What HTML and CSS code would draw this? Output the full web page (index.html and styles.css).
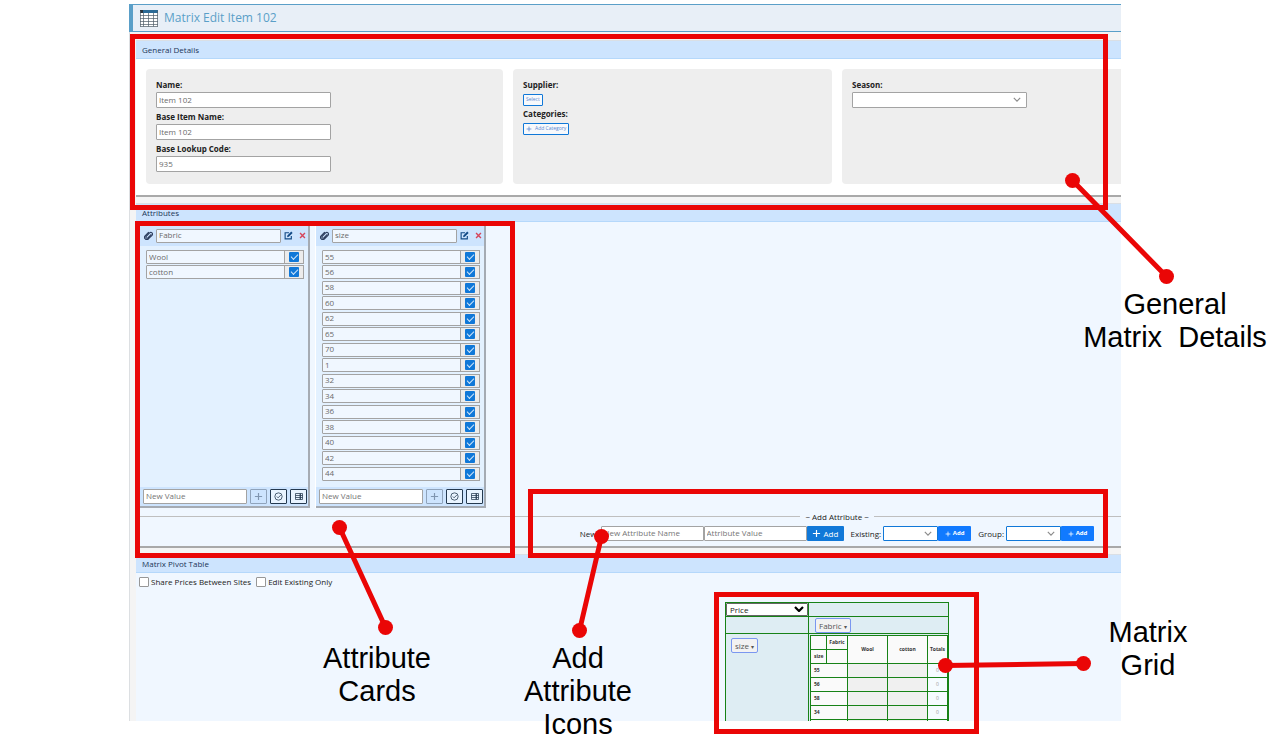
FILE: index.html
```html
<!DOCTYPE html>
<html lang="en">
<head>
<meta charset="utf-8">
<title>Matrix Edit Item 102</title>
<link rel="stylesheet" href="styles.css">
</head>
<body>
<svg class="sprite" aria-hidden="true">
  <symbol id="chevron" viewBox="0 0 10 6"><path d="M1 1l4 4 4-4" fill="none" stroke="currentColor" stroke-width="1.4"/></symbol>
  <symbol id="chevron-bold" viewBox="0 0 10 6"><path d="M1 1l4 4 4-4" fill="none" stroke="currentColor" stroke-width="2.2"/></symbol>
  <symbol id="plus" viewBox="0 0 10 10"><path d="M5 1v8M1 5h8" fill="none" stroke="currentColor" stroke-width="1.3"/></symbol>
  <symbol id="clip" viewBox="0 0 16 16"><path d="M12.5 6.5l-5.6 5.7a2 2 0 0 1-2.9-2.8l6-6a3 3 0 0 1 4.300 4.200l-6.600 6.600a4 4 0 0 1-5.700-5.600L8 2.500" fill="none" stroke="currentColor" stroke-width="2" stroke-linecap="round"/></symbol>
  <symbol id="edit" viewBox="0 0 16 16"><path d="M9 3H2v11h11V9" fill="none" stroke="currentColor" stroke-width="2"/><path d="M5.500 11l.6-3.200L12.800 1l2.500 2.500-6.700 6.800z" fill="currentColor"/></symbol>
  <symbol id="cross" viewBox="0 0 10 10"><path d="M1.500 1.500l7 7M8.500 1.500l-7 7" fill="none" stroke="currentColor" stroke-width="2"/></symbol>
  <symbol id="circle-check" viewBox="0 0 16 16"><circle cx="8" cy="8" r="6.500" fill="none" stroke="currentColor" stroke-width="1.400"/><path d="M5 8l2.300 2.300L12 5.500" fill="none" stroke="currentColor" stroke-width="1.400"/></symbol>
  <symbol id="list" viewBox="0 0 16 14"><path d="M1 1h14v12H1zM1 5h14M1 9h14" fill="none" stroke="currentColor" stroke-width="1.500"/><path d="M10.500 1v12" stroke="currentColor" stroke-width="2.500"/></symbol>
</svg>

<main class="app">
  <header class="title-bar">
    <svg class="title-icon" viewBox="0 0 18 17" aria-hidden="true">
      <path d="M0 .5h18V16.500H0z" fill="#fff"/><path d="M0 0h18v3H0z" fill="#2b6a96"/><path d="M0 0h3v3H0z" fill="#28333d"/>
      <path d="M.5 1v15.500M3.500 3v13.500M8.500 3v13.500M13.500 3v13.500M17.500 1v15.500M0 5.500h18M0 8.500h18M0 11.500h18M0 14.500h18M0 16.500h18" stroke="#4d5b67" fill="none" stroke-width=".7"/>
    </svg>
    <h1 class="title">Matrix Edit Item 102</h1>
  </header>

  <div class="panels">
    <section class="panel">
      <h2 class="panel-head">General Details</h2>
      <div class="details">
        <div class="box">
          <label class="label" for="name">Name:</label>
          <input class="text field" id="name" value="Item 102">
          <label class="label" for="base">Base Item Name:</label>
          <input class="text field" id="base" value="Item 102">
          <label class="label" for="code">Base Lookup Code:</label>
          <input class="text field" id="code" value="935">
        </div>
        <div class="box">
          <div class="label">Supplier:</div>
          <button class="mini">Select</button>
          <div class="label">Categories:</div>
          <button class="mini"><svg class="mini-plus"><use href="#plus"/></svg>Add Category</button>
        </div>
        <div class="box box-last">
          <label class="label" for="season">Season:</label>
          <div class="select field"><select id="season"><option></option></select><svg class="chevron"><use href="#chevron"/></svg></div>
        </div>
      </div>
    </section>

    <section class="panel tinted">
      <h2 class="panel-head">Attributes</h2>
      <div class="cards">
        <article class="card">
          <div class="card-head">
            <svg class="ico"><use href="#clip"/></svg>
            <input class="text grow" value="Fabric" aria-label="Attribute name">
            <button class="plain" aria-label="Edit"><svg class="ico"><use href="#edit"/></svg></button>
            <button class="plain danger" aria-label="Remove"><svg class="ico-x"><use href="#cross"/></svg></button>
          </div>
          <div class="values">
            <div class="value"><input class="text" value="Wool" aria-label="Value"><span class="tick"><input type="checkbox" checked aria-label="Wool"></span></div>
            <div class="value"><input class="text" value="cotton" aria-label="Value"><span class="tick"><input type="checkbox" checked aria-label="cotton"></span></div>
          </div>
          <div class="card-foot">
            <input class="text grow" placeholder="New Value" aria-label="New Value">
            <button class="tool off" aria-label="Add value"><svg class="ico"><use href="#plus"/></svg></button>
            <button class="tool" aria-label="Select all"><svg class="ico"><use href="#circle-check"/></svg></button>
            <button class="tool" aria-label="List"><svg class="ico-list"><use href="#list"/></svg></button>
          </div>
        </article>
        <article class="card">
          <div class="card-head">
            <svg class="ico"><use href="#clip"/></svg>
            <input class="text grow" value="size" aria-label="Attribute name">
            <button class="plain" aria-label="Edit"><svg class="ico"><use href="#edit"/></svg></button>
            <button class="plain danger" aria-label="Remove"><svg class="ico-x"><use href="#cross"/></svg></button>
          </div>
          <div class="values">
            <div class="value"><input class="text" value="55" aria-label="Value"><span class="tick"><input type="checkbox" checked aria-label="55"></span></div>
            <div class="value"><input class="text" value="56" aria-label="Value"><span class="tick"><input type="checkbox" checked aria-label="56"></span></div>
            <div class="value"><input class="text" value="58" aria-label="Value"><span class="tick"><input type="checkbox" checked aria-label="58"></span></div>
            <div class="value"><input class="text" value="60" aria-label="Value"><span class="tick"><input type="checkbox" checked aria-label="60"></span></div>
            <div class="value"><input class="text" value="62" aria-label="Value"><span class="tick"><input type="checkbox" checked aria-label="62"></span></div>
            <div class="value"><input class="text" value="65" aria-label="Value"><span class="tick"><input type="checkbox" checked aria-label="65"></span></div>
            <div class="value"><input class="text" value="70" aria-label="Value"><span class="tick"><input type="checkbox" checked aria-label="70"></span></div>
            <div class="value"><input class="text" value="1" aria-label="Value"><span class="tick"><input type="checkbox" checked aria-label="1"></span></div>
            <div class="value"><input class="text" value="32" aria-label="Value"><span class="tick"><input type="checkbox" checked aria-label="32"></span></div>
            <div class="value"><input class="text" value="34" aria-label="Value"><span class="tick"><input type="checkbox" checked aria-label="34"></span></div>
            <div class="value"><input class="text" value="36" aria-label="Value"><span class="tick"><input type="checkbox" checked aria-label="36"></span></div>
            <div class="value"><input class="text" value="38" aria-label="Value"><span class="tick"><input type="checkbox" checked aria-label="38"></span></div>
            <div class="value"><input class="text" value="40" aria-label="Value"><span class="tick"><input type="checkbox" checked aria-label="40"></span></div>
            <div class="value"><input class="text" value="42" aria-label="Value"><span class="tick"><input type="checkbox" checked aria-label="42"></span></div>
            <div class="value"><input class="text" value="44" aria-label="Value"><span class="tick"><input type="checkbox" checked aria-label="44"></span></div>
          </div>
          <div class="card-foot">
            <input class="text grow" placeholder="New Value" aria-label="New Value">
            <button class="tool off" aria-label="Add value"><svg class="ico"><use href="#plus"/></svg></button>
            <button class="tool" aria-label="Select all"><svg class="ico"><use href="#circle-check"/></svg></button>
            <button class="tool" aria-label="List"><svg class="ico-list"><use href="#list"/></svg></button>
          </div>
        </article>
      </div>
      <div class="divider">~ Add Attribute ~</div>
      <div class="add-row">
        <label class="add-label" for="new-name">New:</label>
        <input class="text add-text" id="new-name" placeholder="New Attribute Name">
        <input class="text add-text" placeholder="Attribute Value" aria-label="Attribute Value">
        <button class="add add-main"><svg class="ico"><use href="#plus"/></svg>Add</button>
        <label class="add-label" for="existing">Existing:</label>
        <div class="select blue"><select id="existing"><option></option></select><svg class="chevron"><use href="#chevron"/></svg></div>
        <button class="add add-small"><svg class="mini-plus"><use href="#plus"/></svg>Add</button>
        <label class="add-label" for="group">Group:</label>
        <div class="select blue"><select id="group"><option></option></select><svg class="chevron"><use href="#chevron"/></svg></div>
        <button class="add add-small"><svg class="mini-plus"><use href="#plus"/></svg>Add</button>
      </div>
    </section>

    <section class="panel tinted pivot-panel">
      <h2 class="panel-head">Matrix Pivot Table</h2>
      <div class="options">
        <label class="option"><input type="checkbox">Share Prices Between Sites</label>
        <label class="option"><input type="checkbox">Edit Existing Only</label>
      </div>
      <table class="pivot">
        <tr class="r-top">
          <td class="c-side"><div class="select price"><select aria-label="Measure"><option>Price</option></select><svg class="chevron"><use href="#chevron-bold"/></svg></div></td>
          <td></td>
        </tr>
        <tr class="r-cols"><td></td><td><button class="pill">Fabric <span class="arrow">▾</span></button></td></tr>
        <tr>
          <td class="c-rows"><button class="pill">size <span class="arrow">▾</span></button></td>
          <td class="c-grid">
            <table class="grid">
              <colgroup><col class="w-a"><col class="w-b"><col class="w-c"><col class="w-c"><col></colgroup>
              <tr><th></th><th>Fabric</th><th rowspan="2">Wool</th><th rowspan="2">cotton</th><th rowspan="2">Totals</th></tr>
              <tr><th class="left">size</th><th></th></tr>
              <tr><th class="left" colspan="2">55</th><td></td><td></td><td class="total">0</td></tr>
              <tr><th class="left" colspan="2">56</th><td></td><td></td><td class="total">0</td></tr>
              <tr><th class="left" colspan="2">58</th><td></td><td></td><td class="total">0</td></tr>
              <tr><th class="left" colspan="2">34</th><td></td><td></td><td class="total">0</td></tr>
              <tr><th class="left" colspan="2"></th><td></td><td></td><td class="total"></td></tr>
            </table>
          </td>
        </tr>
      </table>
    </section>
  </div>
</main>

<svg class="callouts" width="1272" height="749" aria-hidden="true">
  <g fill="none" stroke="#ea0606" stroke-width="5">
    <rect x="132.500" y="36.500" width="973" height="171"/>
    <rect x="137.500" y="223.500" width="375" height="332"/>
    <rect x="530.500" y="491.500" width="575" height="64"/>
    <rect x="716.500" y="594.500" width="260" height="137"/>
    <path d="M1072.500 180.500L1166.500 276.500M339.500 527.500L385.500 627.500M601.500 536.500L579.500 630.500M945.500 665.500L1083.500 663.500"/>
  </g>
  <g fill="#ea0606">
    <circle cx="1072.500" cy="180.500" r="7.500"/><circle cx="1166.500" cy="276.500" r="7.500"/>
    <circle cx="339.500" cy="527.500" r="7.500"/><circle cx="385.500" cy="627.500" r="7.500"/>
    <circle cx="601.500" cy="536.500" r="7.500"/><circle cx="579.500" cy="630.500" r="7.500"/>
    <circle cx="945.500" cy="665.500" r="7.500"/><circle cx="1083.500" cy="663.500" r="7.500"/>
  </g>
</svg>
<p class="note note-general">General
Matrix  Details</p>
<p class="note note-cards">Attribute
Cards</p>
<p class="note note-add">Add
Attribute
Icons</p>
<p class="note note-grid">Matrix
Grid</p>
</body>
</html>
```
FILE: styles.css
```css
* { box-sizing: border-box; }
body {
  margin: 0;
  position: relative;
  height: 100vh;
  overflow: hidden;
  background: #fff;
  color: #222;
  font: 8px/13px "Open Sans", "Noto Sans", sans-serif;
}
input, select, button { font: inherit; color: inherit; margin: 0; }
h1, h2, p { margin: 0; }
svg { display: block; flex: none; }
.sprite { position: absolute; width: 0; height: 0; }

.app {
  margin: 0 151px 0 129px;
  padding-top: 4px;
  height: calc(100vh - 28px);
  overflow: hidden;
  display: flex;
  flex-direction: column;
}
.title-bar {
  display: flex;
  align-items: center;
  gap: 6px;
  height: 28px;
  flex: none;
  padding-left: 7px;
  background: #e8eff7;
  border: solid #5a9fc8;
  border-width: 1px 0 1px 4px;
}
.title-icon { width: 18px; height: 17px; }
.title { font-size: 12px; line-height: 20px; font-weight: 400; color: #5a9fc8; }

.panels {
  flex: 1;
  min-height: 0;
  padding: 8px 0 0 6px;
  display: flex;
  flex-direction: column;
  gap: 6px;
  background: #f4f4f4;
  border-left: 1px solid #dcdfe2;
}
.panel {
  flex: none;
  background: #fff;
  border-top: 1px solid #dadfe5;
  border-bottom: 2px solid #a9a9a9;
}
.tinted { background: #f0f7ff; }
.panel-head {
  height: 18px;
  padding-left: 6px;
  font-size: 8px;
  line-height: 18px;
  font-weight: 400;
  color: #1c3557;
  background: #cde4fe;
  border-bottom: 1px solid #b5d8fb;
}
.details {
  display: grid;
  grid-template-columns: 357fr 319fr 279fr;
  gap: 10px;
  padding: 10px 0 11px 10px;
}
.box { height: 115px; padding: 10px; background: #eee; border-radius: 4px; }
.box-last { border-radius: 4px 0 0 4px; }
.label { display: block; height: 13px; line-height: 11px; font-weight: 700; }
.text {
  display: block;
  min-width: 0;
  padding: 0 2px 2px;
  color: #6b6b6b;
  background: #fff;
  border: 1px solid #a3a3a3;
  border-radius: 1px;
}
.text::placeholder { color: #757575; opacity: 1; }
.field { width: 175px; height: 16px; margin-bottom: 3px; }
.mini {
  display: flex;
  align-items: center;
  gap: 3px;
  height: 12px;
  margin: 2px 0;
  padding: 0 2px 1px;
  font-size: 5px;
  line-height: 9px;
  color: #5a86cf;
  background: #f7f9fc;
  border: 1px solid #1078d8;
  border-radius: 1px;
}
.mini-plus { width: 6px; height: 6px; }
.select { position: relative; background: #fff; border: 1px solid #a3a3a3; border-radius: 1px; }
.select select {
  display: block;
  width: 100%;
  height: 100%;
  padding: 0 3px;
  border: 0;
  background: none;
  appearance: none;
}
.chevron {
  position: absolute;
  right: 5px;
  top: 4px;
  width: 8px;
  height: 5px;
  color: #8a8a8a;
  pointer-events: none;
}

.cards { display: flex; gap: 6px; padding: 3px 4px 8px; }
.card {
  display: flex;
  flex-direction: column;
  width: 170px;
  background: #e3f1ff;
  border: solid #a5abb3;
  border-width: 0 2px 2px 0;
  box-shadow: -1px 0 #fff;
}
.card-head, .card-foot { display: flex; align-items: center; background: #cde4fe; }
.card-head { gap: 3px; height: 21px; padding: 0 2px 0 4px; }
.card-head .text, .value .text { background: #f0f7ff; }
.card-head .text { height: 14px; }
.grow { flex: 1; }
.ico { width: 9px; height: 9px; }
.ico-x { width: 7px; height: 7px; }
.ico-list { width: 8px; height: 7px; }
.plain { display: flex; align-items: center; padding: 0; border: 0; background: none; color: #124a86; }
.danger { padding-left: 3px; color: #d6455a; }
.card-head > .ico { color: #2c3e60; }
.values {
  display: grid;
  grid-template-rows: repeat(15, 1fr);
  height: 241px;
  padding: 4px 4px 5px 6px;
}
.value { display: flex; height: 14px; }
.value .text { flex: 1; }
.tick {
  display: grid;
  place-items: center;
  width: 20px;
  margin-left: -1px;
  background: #ececec;
  border: 1px solid #a3a3a3;
}
.tick input {
  display: grid;
  place-items: center;
  width: 10px;
  height: 10px;
  padding-bottom: 2px;
  appearance: none;
  background: #1078d8;
  border-radius: 1px;
}
.tick input::after {
  content: "";
  width: 6px;
  height: 3px;
  border: solid #cfe6fb;
  border-width: 0 0 1px 1px;
  transform: rotate(-45deg);
}
.card-foot { gap: 3px; height: 19px; padding: 0 1px 0 3px; }
.card-foot .text { height: 15px; }
.tool {
  display: grid;
  place-items: center;
  width: 17px;
  height: 15px;
  padding: 0;
  color: #24394f;
  background: #e9f4ff;
  border: 1px solid #24394f;
  border-radius: 1px;
}
.off { color: #7f95b0; background: #cde4fe; border-color: #8fa3bb; }

.divider { display: flex; align-items: center; gap: 5px; height: 1px; margin-left: 4px; line-height: 1px; }
.divider::before, .divider::after { content: ""; height: 1px; background: #bfbfbf; }
.divider::before { flex: 660; }
.divider::after { flex: 247; }
.add-row {
  display: flex;
  justify-content: flex-end;
  align-items: center;
  padding: 9px 27px 5px 0;
}
.add-label { padding: 0 2px 0 7px; }
.add-text { width: 103px; height: 15px; }
.blue { width: 55px; height: 15px; border-color: #1078d8; }
.add {
  display: flex;
  align-items: center;
  justify-content: center;
  gap: 3px;
  height: 15px;
  padding: 0;
  color: #fff;
  background: #1078d8;
  border: 0;
  border-radius: 1px;
}
.add-main { width: 37px; }
.add-small { width: 33px; gap: 2px; font-size: 6px; font-weight: 700; background: #117aff; }

.pivot-panel { border-bottom: 0; flex: 1 0 auto; }
.options { display: flex; gap: 5px; padding: 2px 3px; }
.option { display: flex; align-items: center; gap: 2px; }
.option input {
  width: 10px;
  height: 10px;
  appearance: none;
  background: #fff;
  border: 1px solid #979797;
  border-radius: 1px;
}
.pivot {
  margin: 12px 0 0 589px;
  width: 224px;
  border-collapse: collapse;
  table-layout: fixed;
  background: #deedf3;
}
.pivot td { padding: 0; border: 1px solid #178217; }
.c-side { width: 83px; }
.r-top { height: 14px; }
.r-cols { height: 17px; }
.price { height: 13px; border-color: #666; }
.price select { line-height: 11px; padding-bottom: 1px; }
.price .chevron { top: 2px; right: 3px; width: 10px; height: 6px; color: #000; }
.pill {
  display: block;
  height: 15px;
  margin: 0 6px;
  padding: 0 3px;
  color: #555;
  background: #f2f2f2;
  border: 1px solid #7a97f0;
  border-radius: 2px;
}
.arrow { font-size: 6px; }
.c-rows { vertical-align: top; }
.c-rows .pill { margin: 4px 5px; }
.pivot .c-grid { padding: 1px 0 0 1px; }
.grid {
  width: 100%;
  border-collapse: collapse;
  table-layout: fixed;
  background: #f0f0f0;
  font-size: 5px;
  line-height: 7px;
}
.grid tr { height: 14px; }
.grid th, .grid td { padding: 0; border: 1px solid #178217; text-align: center; }
.grid th { background: #fafafa; color: #333; }
.grid .left { padding-left: 3px; text-align: left; }
.grid .total { background: #f5fbff; color: #999; }
.w-a { width: 16px; }
.w-b { width: 21px; }
.w-c { width: 40px; }

.callouts { position: absolute; left: 0; top: 0; pointer-events: none; }
.note {
  position: absolute;
  font: 29px/33px "Liberation Sans", Arial, sans-serif;
  color: #000;
  text-align: center;
  white-space: pre;
  transform: translateX(-50%);
}
.note-general { left: 1175px; top: 288px; }
.note-cards { left: 377px; top: 642px; }
.note-add { left: 578px; top: 642px; }
.note-grid { left: 1148px; top: 616px; }
```
